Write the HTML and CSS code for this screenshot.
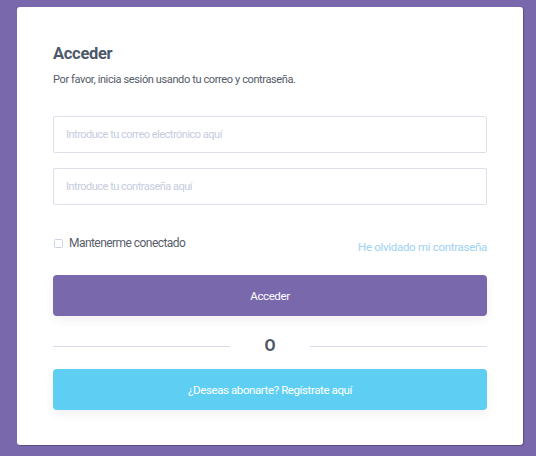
FILE: index.html
```html
<!DOCTYPE html>
<html lang="es">
<head>
<meta charset="utf-8">
<title>Acceder</title>
<link rel="stylesheet" href="styles.css">
</head>
<body>
<main class="card">
  <h1 class="title">Acceder</h1>
  <p class="subtitle">Por favor, inicia sesión usando tu correo y contraseña.</p>
  <form class="form">
    <input class="field field-first" type="email" placeholder="Introduce tu correo electrónico aquí">
    <input class="field" type="password" placeholder="Introduce tu contraseña aquí">
    <div class="options">
      <label class="remember"><span class="checkbox"></span>Mantenerme conectado</label>
      <a class="forgot" href="#">He olvidado mi contraseña</a>
    </div>
    <button class="btn btn-primary" type="button">Acceder</button>
    <div class="divider"><span class="line"></span><span class="or">O</span><span class="line"></span></div>
    <button class="btn btn-secondary" type="button">¿Deseas abonarte? Regístrate aquí</button>
  </form>
</main>
</body>
</html>
```
FILE: styles.css
```css
html, body {
  margin: 0;
  padding: 0;
}
body {
  background: #7a68ad;
  width: 536px;
  height: 456px;
  font-family: Roboto, "Noto Sans", sans-serif;
  overflow: hidden;
}
.card {
  box-sizing: border-box;
  margin: 7px 13px 0 17px;
  height: 438px;
  background: #ffffff;
  border-radius: 3px;
  padding: 36px 36px 35px;
  box-shadow: 1px 1px 1px rgba(0, 0, 0, 0.25);
}
.title {
  margin: 0;
  font-size: 16.5px;
  line-height: 22px;
  font-weight: 700;
  color: #4d5869;
  letter-spacing: -0.3px;
}
.subtitle {
  margin: 8px 0 0;
  font-size: 11px;
  line-height: 14px;
  color: #545b68;
  letter-spacing: -0.38px;
}
.form {
  display: flex;
  flex-direction: column;
}
.field {
  box-sizing: border-box;
  height: 37px;
  margin-top: 15px;
  border: 1px solid #dcdfea;
  border-radius: 2px;
  padding: 0 12px;
  font-family: inherit;
  font-size: 11px;
  letter-spacing: -0.5px;
  color: #4d5869;
  outline: none;
}
.field-first {
  margin-top: 29px;
}
.field::placeholder {
  color: #c6cce0;
}
.options {
  display: flex;
  justify-content: space-between;
  align-items: flex-start;
  height: 20px;
  margin-top: 30px;
}
.remember {
  display: flex;
  align-items: center;
  font-size: 12px;
  line-height: 16px;
  color: #585e6b;
  letter-spacing: -0.55px;
}
.checkbox {
  box-sizing: border-box;
  width: 9px;
  height: 9px;
  margin: 1px 6px 0 1px;
  border: 1px solid #cbd2e2;
  border-radius: 1.5px;
}
.forgot {
  align-self: flex-end;
  font-size: 11.5px;
  line-height: 16px;
  color: #9dd2f2;
  text-decoration: none;
  letter-spacing: -0.3px;
}
.btn {
  height: 41px;
  border: none;
  border-radius: 4px;
  font-family: inherit;
  font-size: 11.5px;
  color: #ffffff;
  letter-spacing: -0.4px;
  box-shadow: 0 4px 10px rgba(60, 60, 100, 0.07);
  padding: 0;
}
.btn-primary {
  margin-top: 20px;
  background: #7a68ad;
}
.btn-secondary {
  margin-top: 13px;
  background: #5ecff3;
}
.divider {
  display: flex;
  align-items: center;
  height: 20px;
  margin-top: 20px;
}
.line {
  flex: 1;
  height: 1px;
  background: #dcd8ec;
}
.or {
  width: 80px;
  text-align: center;
  font-size: 16px;
  font-weight: 700;
  color: #4d5869;
  line-height: 20px;
}
```
